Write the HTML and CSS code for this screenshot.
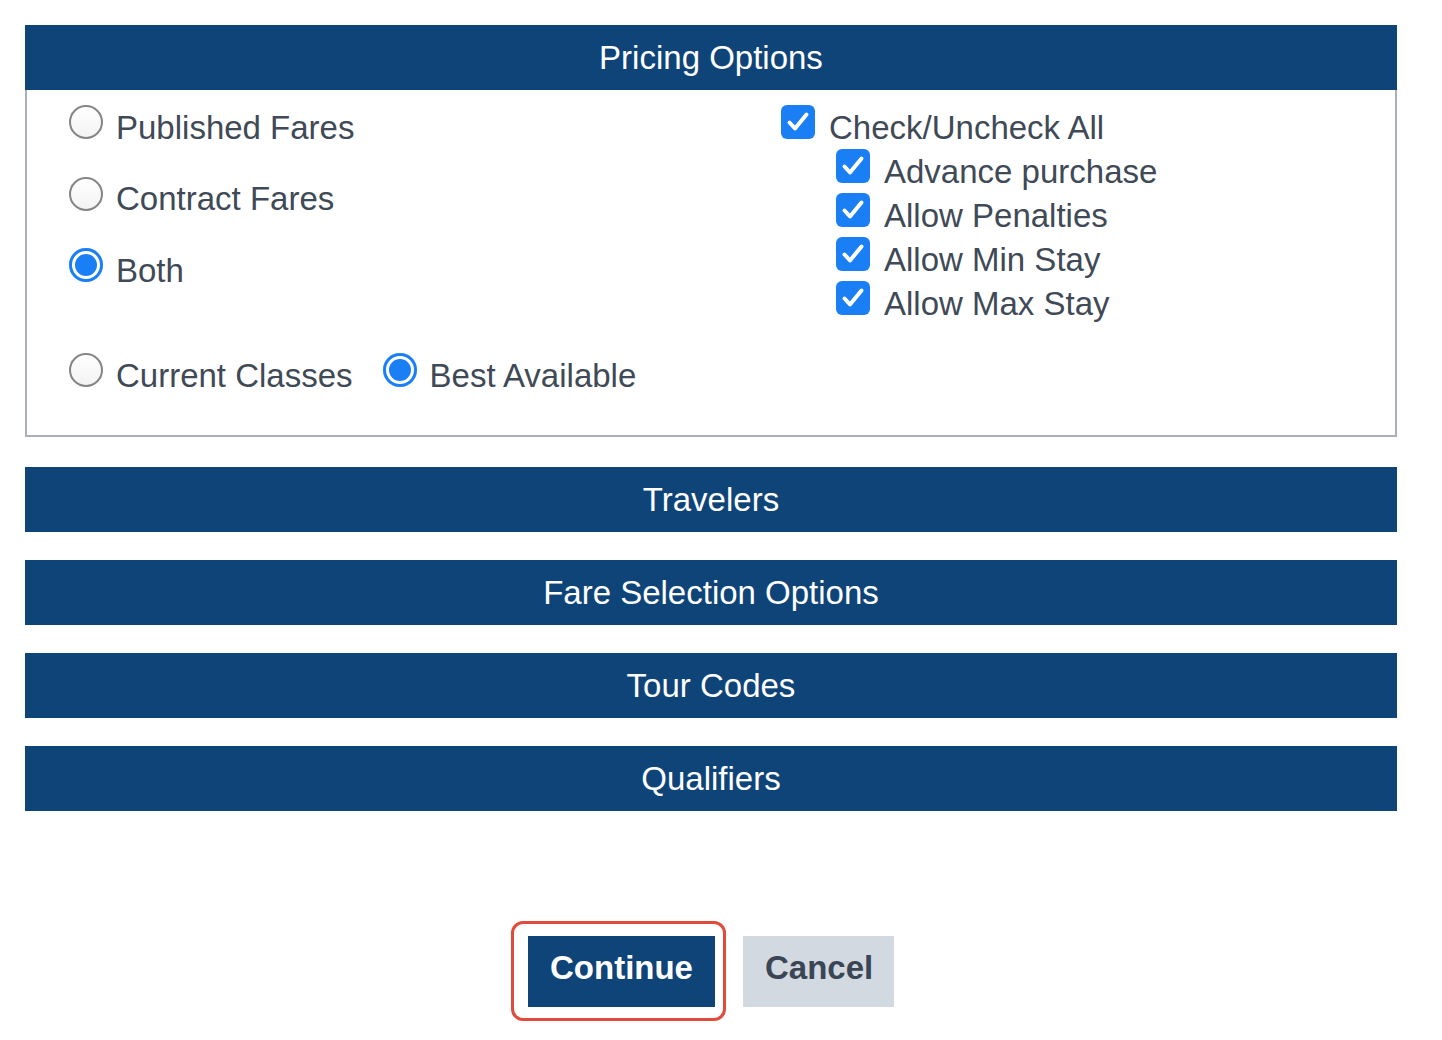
FILE: index.html
```html
<!DOCTYPE html>
<html lang="en">
<head>
<meta charset="utf-8">
<title>Pricing Options</title>
<link rel="stylesheet" href="styles.css">
</head>
<body>
<div class="page">
  <section class="panel">
    <h2 class="bar">Pricing Options</h2>
    <div class="panel-body">
      <div class="fare-col">
        <label class="opt"><span class="radio"></span><span class="txt">Published Fares</span></label>
        <label class="opt"><span class="radio"></span><span class="txt">Contract Fares</span></label>
        <label class="opt"><span class="radio on"></span><span class="txt">Both</span></label>
        <div class="class-row">
          <label class="opt"><span class="radio"></span><span class="txt">Current Classes</span></label>
          <label class="opt"><span class="radio on"></span><span class="txt">Best Available</span></label>
        </div>
      </div>
      <div class="rules-col">
        <label class="chk-row"><span class="check"><svg viewBox="0 0 34 34"><path d="M8.5 17.5 L14 23.5 L25.5 9.5"/></svg></span><span class="txt">Check/Uncheck All</span></label>
        <div class="sub">
          <label class="chk-row"><span class="check"><svg viewBox="0 0 34 34"><path d="M8.5 17.5 L14 23.5 L25.5 9.5"/></svg></span><span class="txt">Advance purchase</span></label>
          <label class="chk-row"><span class="check"><svg viewBox="0 0 34 34"><path d="M8.5 17.5 L14 23.5 L25.5 9.5"/></svg></span><span class="txt">Allow Penalties</span></label>
          <label class="chk-row"><span class="check"><svg viewBox="0 0 34 34"><path d="M8.5 17.5 L14 23.5 L25.5 9.5"/></svg></span><span class="txt">Allow Min Stay</span></label>
          <label class="chk-row"><span class="check"><svg viewBox="0 0 34 34"><path d="M8.5 17.5 L14 23.5 L25.5 9.5"/></svg></span><span class="txt">Allow Max Stay</span></label>
        </div>
      </div>
    </div>
  </section>
  <div class="bar section">Travelers</div>
  <div class="bar section">Fare Selection Options</div>
  <div class="bar section">Tour Codes</div>
  <div class="bar section">Qualifiers</div>
  <div class="actions">
    <span class="highlight"><button class="btn btn-primary">Continue</button></span>
    <button class="btn btn-secondary">Cancel</button>
  </div>
</div>
</body>
</html>
```

FILE: styles.css
```css
* { box-sizing: border-box; }
html, body { margin: 0; padding: 0; background: #fff; }
body {
  font-family: "Liberation Sans", Arial, Helvetica, sans-serif;
  color: #404a57;
}
.page {
  width: 1372px;
  margin-left: 25px;
  padding-top: 25px;
  padding-bottom: 33px;
}
.bar {
  margin: 0;
  height: 65px;
  background: #0f4478;
  color: #fff;
  font-size: 33px;
  font-weight: normal;
  display: flex;
  align-items: center;
  justify-content: center;
}
.section { margin-top: 28px; }
.panel { margin-bottom: 30px; }
.panel-body {
  height: 347px;
  border: 2px solid #a9b0b7;
  border-top: 0;
  display: grid;
  grid-template-columns: 712px 1fr;
  padding-left: 42px;
}
.fare-col {
  padding-top: 14px;
  display: flex;
  flex-direction: column;
  gap: 35.5px;
}
.opt {
  height: 36px;
  display: flex;
  align-items: center;
  gap: 13px;
  font-size: 33px;
  line-height: 36px;
  white-space: nowrap;
}
.txt { padding-top: 11px; }
.class-row {
  margin-top: 33.5px;
  display: flex;
  gap: 30px;
}
.radio {
  flex: none;
  width: 34px;
  height: 34px;
  border-radius: 50%;
  border: 2px solid #858585;
  background: linear-gradient(#fff, #f3f3f3);
}
.radio.on {
  border: 0;
  background: #1a7ef5;
  box-shadow: inset 0 0 0 3px #1a7ef5, inset 0 0 0 6px #fff;
}
.rules-col {
  padding-top: 15px;
  display: flex;
  flex-direction: column;
  gap: 10px;
}
.sub {
  padding-left: 55px;
  display: flex;
  flex-direction: column;
  gap: 10px;
}
.chk-row {
  height: 34px;
  display: flex;
  align-items: center;
  gap: 14px;
  font-size: 33px;
  line-height: 34px;
  white-space: nowrap;
}
.check {
  flex: none;
  width: 34px;
  height: 34px;
  border-radius: 6px;
  background: #1a7ef5;
  display: flex;
}
.check svg { width: 34px; height: 34px; }
.check path {
  fill: none;
  stroke: #fff;
  stroke-width: 4;
  stroke-linecap: round;
  stroke-linejoin: round;
}
.actions {
  margin-top: 125px;
  display: flex;
  justify-content: center;
  gap: 28px;
}
.highlight {
  position: relative;
  display: flex;
}
.highlight::after {
  content: "";
  position: absolute;
  top: -15px;
  left: -17px;
  right: -11px;
  bottom: -14px;
  border: 3px solid #e04b3b;
  border-radius: 12px;
  pointer-events: none;
}
.btn {
  font-family: "Liberation Sans", Arial, Helvetica, sans-serif;
  font-size: 33px;
  font-weight: bold;
  height: 71px;
  padding: 0 22px 7px;
  border: 0;
  border-radius: 0;
  cursor: pointer;
}
.btn-primary {
  width: 187px;
  background: #0f4478;
  color: #fff;
}
.btn-secondary {
  width: 151px;
  background: #d2d9e0;
  color: #3a4656;
}
```
